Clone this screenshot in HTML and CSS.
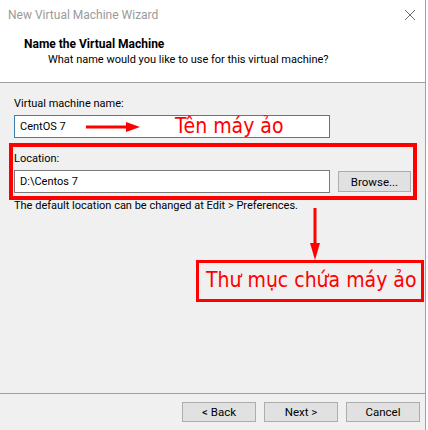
FILE: index.html
```html
<!DOCTYPE html>
<html>
<head>
<meta charset="utf-8">
<link rel="stylesheet" href="styles.css">
</head>
<body>
<div class="window">
  <div class="header">
    <div class="titlebar">
      <span class="title">New Virtual Machine Wizard</span>
      <svg class="close" width="12" height="12" viewBox="0 0 12 12"><path d="M1 1 L11 11 M11 1 L1 11" stroke="#6d6d6d" stroke-width="1" fill="none"/></svg>
    </div>
    <div class="heading">Name the Virtual Machine</div>
    <div class="subheading">What name would you like to use for this virtual machine?</div>
  </div>
  <div class="content">
    <div class="label">Virtual machine name:</div>
    <div class="input focused">CentOS 7</div>
    <div class="location-box">
      <div class="label loc-label">Location:</div>
      <div class="loc-row">
        <div class="input loc-input">D:\Centos 7</div>
        <div class="btn browse">Browse...</div>
      </div>
    </div>
    <div class="hint">The default location can be changed at Edit &gt; Preferences.</div>
  </div>
  <div class="footer">
    <div class="btn">&lt; Back</div>
    <div class="btn">Next &gt;</div>
    <div class="btn">Cancel</div>
  </div>

  <svg class="arrow-right" width="60" height="14" viewBox="0 0 60 14"><line x1="2" y1="7" x2="44" y2="7" stroke="#f00" stroke-width="3"/><polygon points="42,2 56,7 42,12" fill="#f00"/></svg>
  <div class="note note-name">Tên máy ảo</div>
  <svg class="arrow-down" width="14" height="54" viewBox="0 0 14 54"><line x1="7" y1="0" x2="7" y2="38" stroke="#f00" stroke-width="3"/><polygon points="2,35 12,35 7,52" fill="#f00"/></svg>
  <div class="note-box">Thư mục chứa máy ảo</div>
</div>
</body>
</html>
```

FILE: styles.css
```css
html, body {
  margin: 0;
  padding: 0;
  background: #ffffff;
}
body {
  width: 428px;
  height: 430px;
  overflow: hidden;
  font-family: Roboto, "Noto Sans", sans-serif;
  font-size: 11px;
  color: #000;
}
.window {
  position: relative;
  width: 426px;
  height: 430px;
  box-sizing: border-box;
  border-right: 1px solid #a0a0a0;
  background: #f0f0f0;
  display: flex;
  flex-direction: column;
}
.header {
  background: #ffffff;
  height: 83px;
  box-sizing: border-box;
  border-bottom: 1px solid #a0a0a0;
}
.titlebar {
  height: 30px;
  display: flex;
  align-items: center;
  justify-content: space-between;
  padding: 0 9px 0 8px;
}
.title {
  color: #9a9a9a;
  font-size: 12px;
}
.close {
  display: block;
}
.heading {
  font-weight: bold;
  font-size: 12px;
  padding-left: 24px;
  line-height: 15px;
  margin-top: 7px;
}
.subheading {
  padding-left: 48px;
  line-height: 15px;
}
.content {
  flex: 1;
  padding: 13px 0 0 14px;
}
.label {
  line-height: 16px;
}
.input {
  box-sizing: border-box;
  width: 316px;
  height: 23px;
  background: #fff;
  border: 1px solid #7a7a7a;
  line-height: 21px;
  padding-left: 5px;
  margin-top: 3px;
}
.input.focused {
  border-color: #3c7fb1;
}
.location-box {
  box-sizing: border-box;
  width: 408px;
  height: 57px;
  margin: 5px 0 0 -5px;
  border: 4px solid #ff0000;
  padding: 4px 0 0 1px;
}
.loc-row {
  display: flex;
  align-items: center;
  gap: 8px;
  margin-top: 3px;
}
.loc-input {
  margin-top: 0;
}
.btn {
  box-sizing: border-box;
  width: 74px;
  height: 20px;
  background: #e1e1e1;
  border: 1px solid #adadad;
  display: flex;
  align-items: center;
  justify-content: center;
  font-size: 11.5px;
}
.browse {
  width: 73px;
  height: 21px;
}
.hint {
  line-height: 16px;
  margin-top: -2px;
}
.footer {
  height: 37px;
  box-sizing: border-box;
  border-top: 1px solid #a0a0a0;
  display: flex;
  justify-content: flex-end;
  gap: 8px;
  padding: 8px 5px 0 0;
}
.arrow-right {
  position: absolute;
  left: 84px;
  top: 120px;
}
.note {
  position: absolute;
  color: #ff0000;
  font-family: "DejaVu Sans Condensed", "DejaVu Sans", sans-serif;
  font-size: 21px;
  line-height: 24px;
}
.note-name {
  left: 175px;
  top: 114px;
}
.arrow-down {
  position: absolute;
  left: 308px;
  top: 208px;
}
.note-box {
  position: absolute;
  left: 196px;
  top: 260px;
  width: 228px;
  height: 42px;
  box-sizing: border-box;
  border: 3px solid #ff0000;
  color: #ff0000;
  font-family: "DejaVu Sans Condensed", "DejaVu Sans", sans-serif;
  font-size: 21px;
  line-height: 34px;
  padding-left: 7px;
  white-space: nowrap;
}
```
